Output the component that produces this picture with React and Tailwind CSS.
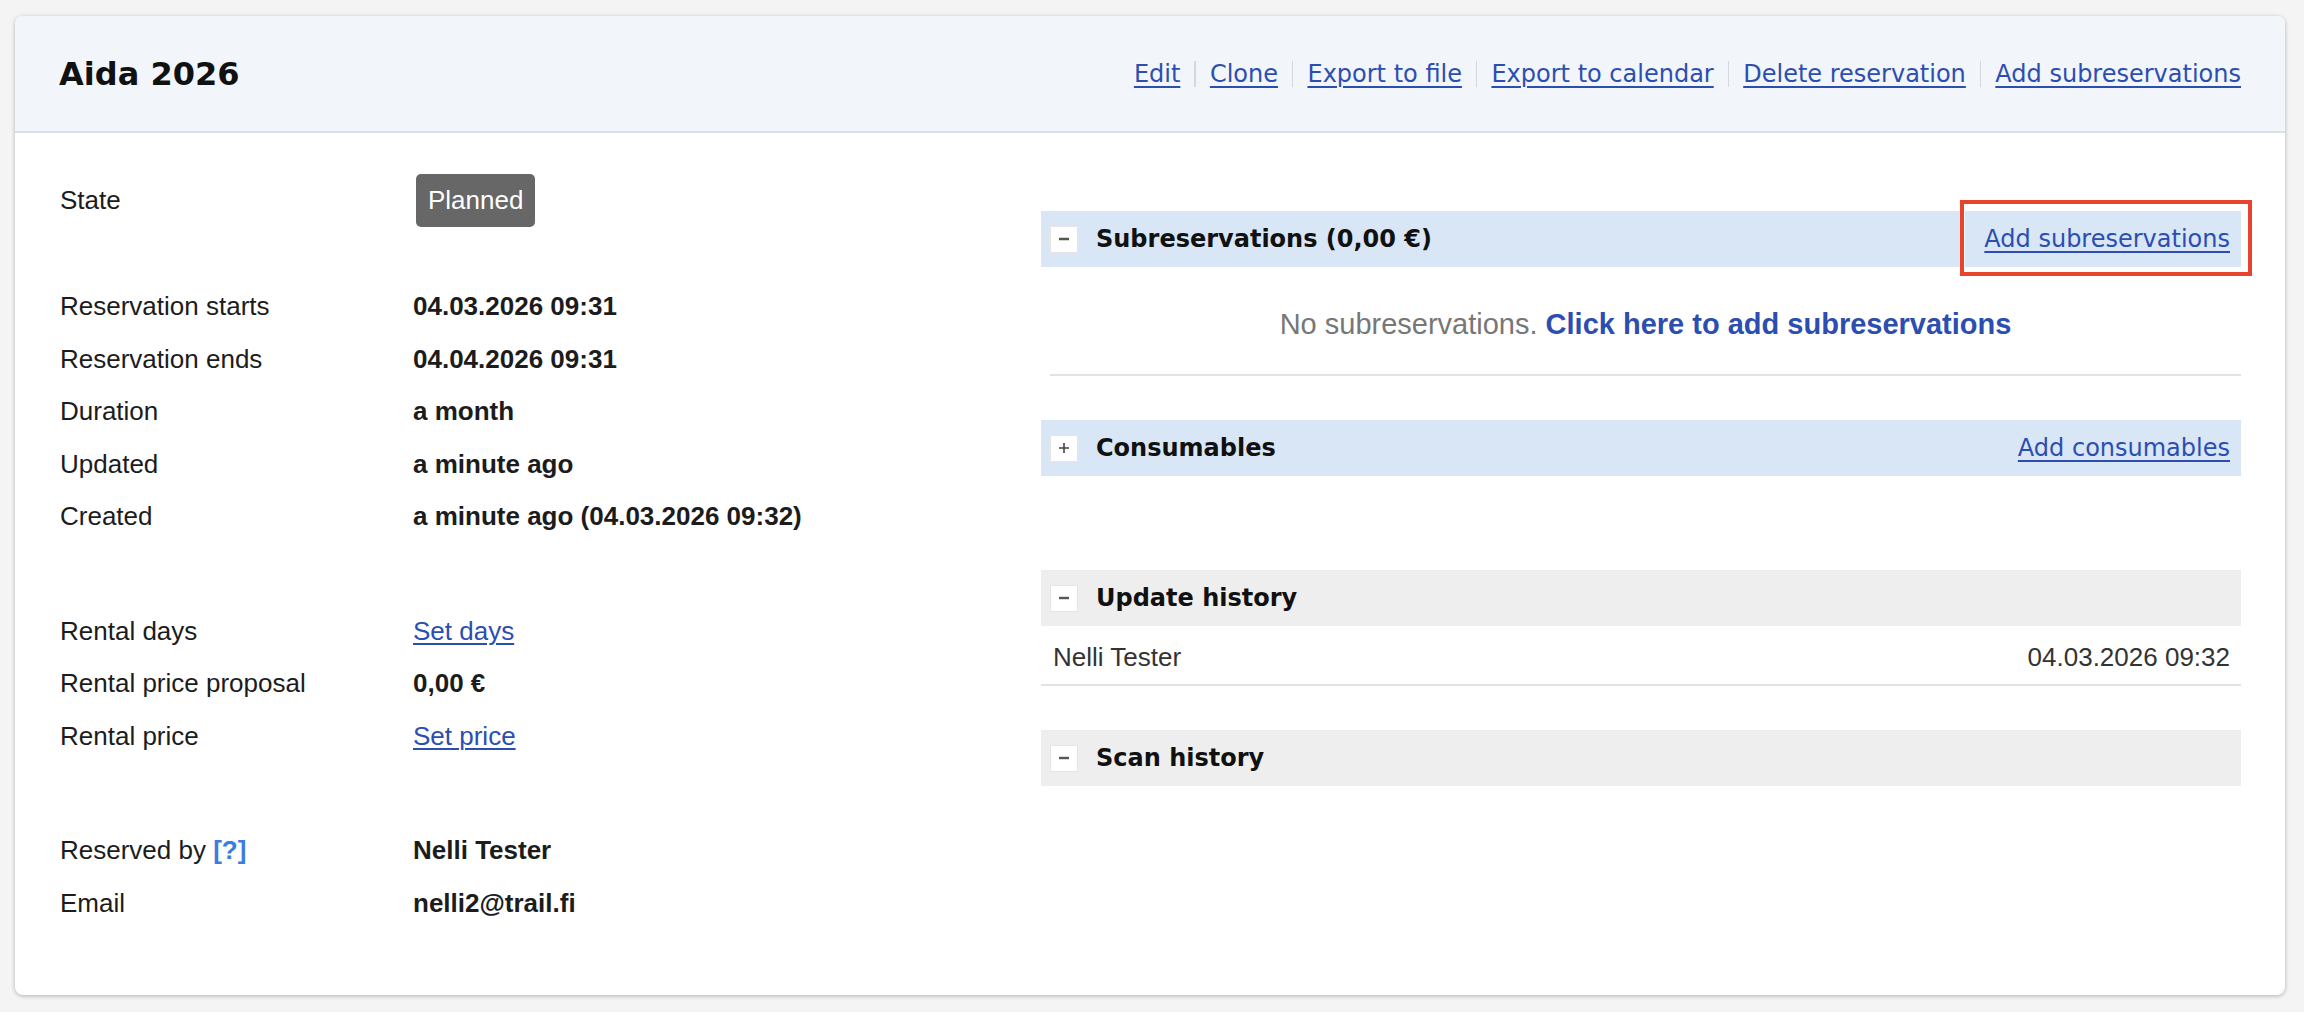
import React from 'react';

const sans = "font-['Liberation_Sans',Arial,sans-serif]";
const ui = "font-['DejaVu_Sans',Verdana,sans-serif]";

const headerLinks = ['Edit', 'Clone', 'Export to file', 'Export to calendar', 'Delete reservation', 'Add subreservations'];

function Row({ label, children }) {
  return (
    <div className="flex h-[52.5px] items-center">
      <div className="w-[353px] shrink-0 text-[#1c1c1c]">{label}</div>
      <div className="font-bold text-[#1c1c1c]">{children}</div>
    </div>
  );
}

function TextLink({ children }) {
  return (
    <a href="#" className="text-[#2b4eb0] underline decoration-[2px] underline-offset-[3px]">
      {children}
    </a>
  );
}

function Toggle({ sign }) {
  return (
    <span className="flex h-[27px] w-[28px] shrink-0 items-center justify-center border border-[#e4e4e4] bg-white">
      {sign === '+' ? (
        <svg width="12" height="12" viewBox="0 0 12 12"><path d="M6 1v10M1 6h10" stroke="#444" strokeWidth="1.6" /></svg>
      ) : (
        <svg width="12" height="4" viewBox="0 0 12 4"><path d="M1 2h10" stroke="#555" strokeWidth="2.4" /></svg>
      )}
    </span>
  );
}

function SectionBar({ title, sign = '-', blue, action, children }) {
  return (
    <div className={`relative flex h-[56px] items-center pl-[9px] pr-[11px] ${blue ? 'bg-[#d8e6f6]' : 'bg-[#eeeeee]'}`}>
      <Toggle sign={sign} />
      <span className={`${ui} ml-[18px] text-[24px] font-bold leading-none text-[#111]`}>{title}</span>
      {action && (
        <a href="#" className={`${ui} ml-auto text-[24px] leading-none text-[#2b4eb0] underline decoration-[2px] underline-offset-[4px]`}>
          {action}
        </a>
      )}
      {children}
    </div>
  );
}

export default function App() {
  return (
    <div className={`min-h-screen bg-[#f4f4f4] pt-[16px] ${sans} text-[26px]`}>
      <div className="ml-[15px] w-[2270px] overflow-hidden rounded-[8px] bg-white shadow-[0_1px_4px_rgba(0,0,0,0.28)]">
        <div className="flex h-[117px] items-center border-b-2 border-[#dcdfea] bg-[#f2f5fa] px-[44px]">
          <h1 className={`${ui} text-[32px] font-bold leading-none text-[#111]`}>Aida 2026</h1>
          <div className={`${ui} ml-auto flex items-center text-[24px] leading-none`}>
            {headerLinks.map((l, i) => (
              <React.Fragment key={l}>
                {i > 0 && <span className="mx-[14px] h-[26px] w-[1.5px] bg-[#d6d8de]" />}
                <a href="#" className="text-[#2b4eb0] underline decoration-[2px] underline-offset-[4px]">{l}</a>
              </React.Fragment>
            ))}
          </div>
        </div>

        <div className="flex pl-[45px] pr-[44px] pt-[41px] pb-[65px]">
          <div className="flex-1">
            <div className="flex h-[52.5px] items-center">
              <div className="w-[353px] shrink-0 text-[#1c1c1c]">State</div>
              <span className="ml-[3px] flex h-[53px] items-center rounded-[5px] bg-[#676767] px-[12px] text-white">Planned</span>
            </div>

            <div className="mt-[54px]">
              <Row label="Reservation starts">04.03.2026 09:31</Row>
              <Row label="Reservation ends">04.04.2026 09:31</Row>
              <Row label="Duration">a month</Row>
              <Row label="Updated">a minute ago</Row>
              <Row label="Created">a minute ago (04.03.2026 09:32)</Row>
            </div>

            <div className="mt-[62px]">
              <div className="flex h-[52.5px] items-center">
                <div className="w-[353px] shrink-0 text-[#1c1c1c]">Rental days</div>
                <TextLink>Set days</TextLink>
              </div>
              <Row label="Rental price proposal">0,00 €</Row>
              <div className="flex h-[52.5px] items-center">
                <div className="w-[353px] shrink-0 text-[#1c1c1c]">Rental price</div>
                <TextLink>Set price</TextLink>
              </div>
            </div>

            <div className="mt-[62px]">
              <Row
                label={
                  <>
                    Reserved by <span className="font-bold text-[#3a7de0]">[?]</span>
                  </>
                }
              >
                Nelli Tester
              </Row>
              <Row label="Email">nelli2@trail.fi</Row>
            </div>
          </div>

          <div className="mt-[37px] w-[1200px] shrink-0">
            <SectionBar title="Subreservations (0,00 €)" blue action="Add subreservations">
              <span className="pointer-events-none absolute right-[-11px] top-[-11px] h-[76px] w-[292px] border-4 border-[#e8432d] shadow-[inset_0_0_0_1px_white]" />
            </SectionBar>
            <div className="ml-[9px] flex h-[109px] items-center justify-center border-b-2 border-[#e2e2e2] pt-[8px] text-[29px]">
              <span className="text-[#777]">No subreservations.&nbsp;</span>
              <a href="#" className="font-bold text-[#2b4eb0]">Click here to add subreservations</a>
            </div>

            <div className="mt-[44px]">
              <SectionBar title="Consumables" sign="+" blue action="Add consumables" />
            </div>

            <div className="mt-[94px]">
              <SectionBar title="Update history" />
              <div className="flex h-[60px] items-center justify-between border-b-2 border-[#e3e3e3] pl-[12px] pr-[11px] pt-[4px] text-[#333]">
                <span>Nelli Tester</span>
                <span>04.03.2026 09:32</span>
              </div>
            </div>

            <div className="mt-[44px]">
              <SectionBar title="Scan history" />
            </div>
          </div>
        </div>
      </div>
    </div>
  );
}
